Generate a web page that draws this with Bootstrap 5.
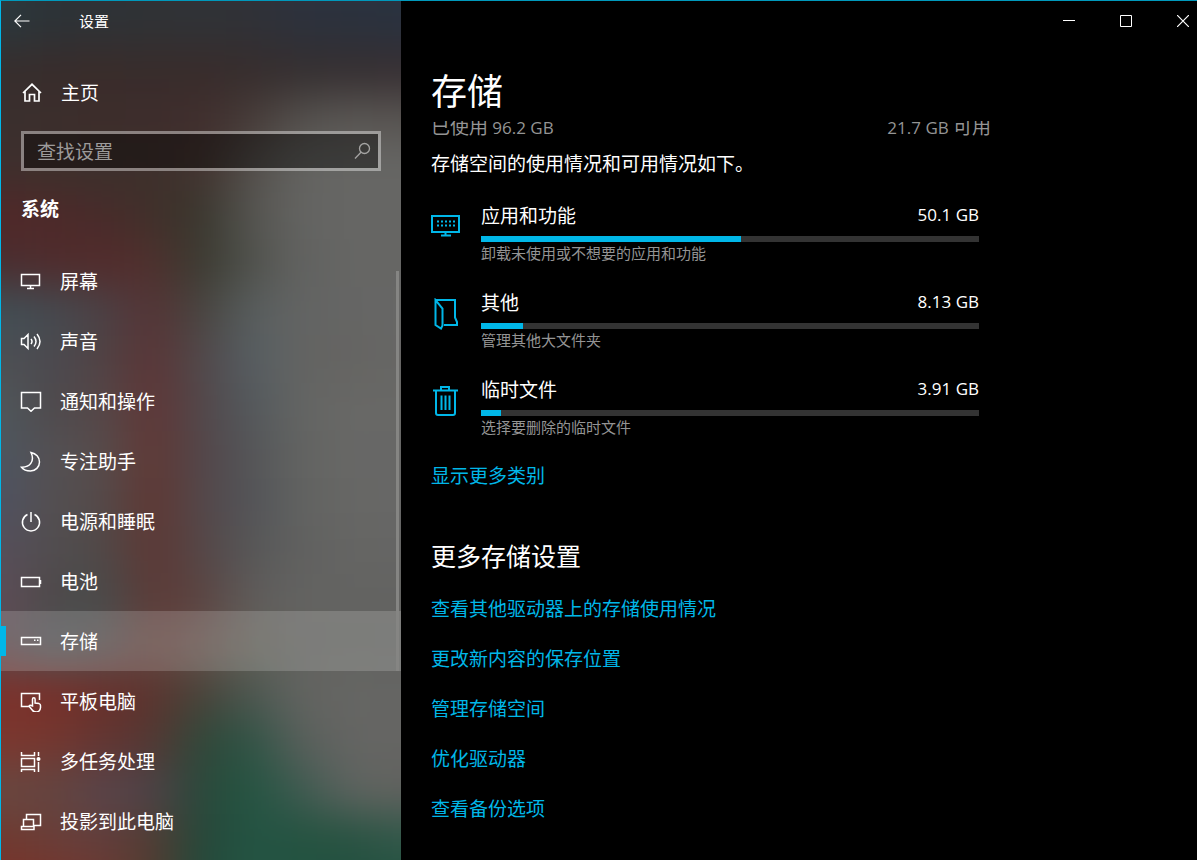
<!DOCTYPE html>
<html lang="zh-CN">
<head>
<meta charset="utf-8">
<meta name="viewport" content="width=device-width, initial-scale=1">
<title>设置</title>
<link href="https://cdn.jsdelivr.net/npm/bootstrap@5.3.0/dist/css/bootstrap.min.css" rel="stylesheet">
<style>
  :root { --accent: #00b7e8; --accent-dim: #0099bc; --muted: #949494; }
  body { background: #000; color: #fff; font-family: "Noto Sans CJK SC", sans-serif; font-size: 19px; line-height: 26px; }
  svg { fill: none; stroke: currentColor; flex: none; display: block; }
  .app-window { border-top: 1px solid var(--accent-dim); border-left: 1px solid var(--accent); }
  .title-row { height: 40px; }
  .bare { background: none; border: 0; color: inherit; padding: 0; display: flex; align-items: center; justify-content: center; }

  /* sidebar */
  .side-pane { flex: 0 0 400px; isolation: isolate; }
  .backdrop { position: absolute; inset: -50px; z-index: -1; filter: blur(20px); display: flex; flex-direction: column; }
  .backdrop i { flex: 1; }
  .backdrop i:nth-child(1)  { background: linear-gradient(90deg,#2b3a40,#2b3a40,#2b3338,#2d3338,#2e3236,#303338,#2f3338,#2c3340,#2a3340,#2a3442,#2a3442); }
  .backdrop i:nth-child(2)  { background: linear-gradient(90deg,#2c383d,#2c383d,#2d3236,#2e3236,#303235,#303236,#303136,#2d313c,#2b313c,#2a313e,#2a313e); }
  .backdrop i:nth-child(3)  { background: linear-gradient(90deg,#362e2d,#362e2d,#382c2b,#392c2a,#382c2b,#382c2b,#372d2d,#352f30,#362f31,#372f32,#372f32); }
  .backdrop i:nth-child(4)  { background: linear-gradient(90deg,#3a302e,#3a302e,#3b2e2c,#3d2d2b,#3e2d2c,#402e2d,#463b38,#54504d,#5a5754,#585451,#585451); }
  .backdrop i:nth-child(5)  { background: linear-gradient(90deg,#3f2f2d,#3f2f2d,#3d302c,#3c302c,#3d302c,#42322e,#534f4b,#646461,#666664,#666664,#666664); }
  .backdrop i:nth-child(6)  { background: linear-gradient(90deg,#512828,#512828,#4d2929,#482b2a,#41302a,#38362d,#555551,#646462,#666664,#666664,#666664); }
  .backdrop i:nth-child(7)  { background: linear-gradient(90deg,#4a2e30,#4a2e30,#4f2c2d,#532b2b,#50302e,#393a30,#50514c,#626361,#666664,#666664,#666664); }
  .backdrop i:nth-child(8)  { background: linear-gradient(90deg,#414f56,#414f56,#454a50,#4a4246,#573335,#46443f,#585e5f,#636463,#656564,#676766,#676766); }
  .backdrop i:nth-child(9)  { background: linear-gradient(90deg,#4e4f53,#4e4f53,#4b4a50,#504345,#5b3435,#50484a,#555e63,#646462,#656461,#676765,#676765); }
  .backdrop i:nth-child(10) { background: linear-gradient(90deg,#50585c,#50585c,#4e494c,#544849,#613535,#51474a,#53595d,#646563,#686866,#686866,#686866); }
  .backdrop i:nth-child(11) { background: linear-gradient(90deg,#4d5660,#4d5660,#545053,#564d4d,#613733,#52464a,#535558,#636462,#686866,#676766,#676766); }
  .backdrop i:nth-child(12) { background: linear-gradient(90deg,#4f5262,#4f5262,#544f50,#534b4b,#603631,#53474a,#525458,#626361,#676765,#676766,#676766); }
  .backdrop i:nth-child(13) { background: linear-gradient(90deg,#564f5a,#564f5a,#514d4f,#4f4a49,#5e3733,#544647,#565758,#616160,#656563,#656564,#656564); }
  .backdrop i:nth-child(14) { background: linear-gradient(90deg,#5e4d58,#5e4d58,#4e4848,#474c4c,#5d3a36,#5a4341,#5f5c5a,#636361,#636361,#636361,#636361); }
  .backdrop i:nth-child(15) { background: linear-gradient(90deg,#5d494d,#5d494d,#4f5759,#565151,#664641,#65524d,#626158,#62625f,#626360,#626361,#626361); }
  .backdrop i:nth-child(16) { background: linear-gradient(90deg,#7c312c,#7c312c,#783029,#6a302b,#5c332e,#474339,#4b5750,#636461,#666663,#656563,#656563); }
  .backdrop i:nth-child(17) { background: linear-gradient(90deg,#7c372e,#7c372e,#753830,#623532,#553733,#2f483a,#2e5445,#595f5b,#656563,#656563,#656563); }
  .backdrop i:nth-child(18) { background: linear-gradient(90deg,#684842,#684842,#64443f,#58454b,#4f4248,#29483a,#245542,#3e5a50,#5f6460,#62625f,#62625f); }
  .backdrop i:nth-child(19) { background: linear-gradient(90deg,#70392f,#70392f,#6b3e38,#623e3c,#553b33,#24483a,#245443,#245341,#285241,#32584a,#32584a); }
  .backdrop i:nth-child(20) { background: linear-gradient(90deg,#7b322a,#7b322a,#76332a,#6f3932,#523d31,#20493a,#245644,#22523f,#225040,#225140,#225140); }
  .back-btn { width: 41px; height: 38px; }
  .side-title { font-size: 15px; margin-left: 37px; }
  .home-link { margin-top: 31px; height: 40px; padding-left: 20px; gap: 18px; }
  .search-box { margin: 19px 20px 0; height: 40px; border: 3px solid rgba(255,255,255,.4); background: rgba(0,0,0,.4); background-clip: padding-box; padding: 0 6px 0 13px; }
  .search-box input { background: none; border: 0; outline: 0; color: #fff; min-width: 0; padding: 0; }
  .search-box input::placeholder { color: #9d9b9a; opacity: 1; }
  .search-box svg { color: #a5a4a3; }
  .side-heading { font-size: 19px; font-weight: 700; line-height: 26px; margin: 24px 20px 30px; }
  .side-item { height: 60px; padding-left: 19px; gap: 18px; position: relative; }
  .side-item svg { stroke-width: 1.5; }
  .side-item.active { background: rgba(255,255,255,.17); }
  .side-item.active::before { content: ""; position: absolute; left: -1px; top: 15px; width: 6px; height: 30px; background: var(--accent); }
  .scroll-thumb { position: absolute; right: 2px; top: 20px; width: 3px; height: 400px; background: #858583; }

  /* main pane */
  .window-btns { gap: 29px; }
  .window-btns .bare { width: 28px; height: 38px; }
  .pane-body { padding: 0 30px; }
  .pane-title { font-size: 36px; font-weight: 400; line-height: 48px; margin: 24px 0 8px; }
  .scroll-col { max-width: 560px; }
  .usage-line { height: 26px; margin-top: -8px; color: var(--muted); }
  .gb { font-family: "Open Sans", "Noto Sans CJK SC", sans-serif; font-size: 17px; }
  .intro { margin: 11px 0 26px; }
  .usage-list { gap: 26px; margin-right: 12px; }
  .usage-item { gap: 20px; }
  .usage-item svg { color: var(--accent); margin-top: 9px; }
  .usage-label { height: 26px; }
  .usage-bar { height: 6px; border-radius: 0; background: #333; margin: 8px 0 1px; --bs-progress-bar-bg: var(--accent); }
  .usage-note { font-size: 15px; line-height: 20px; color: var(--muted); }
  .accent-link { color: var(--accent); text-decoration: none; }
  .accent-link:hover { color: #7fdbf3; }
  .more-link { margin-top: 25px; }
  .sub-title { font-size: 25px; font-weight: 400; line-height: 34px; margin: 50px 0 23px; }
  .link-stack { gap: 24px; }
</style>
</head>
<body>
<div class="app-window d-flex vh-100 overflow-hidden">
  <aside class="side-pane position-relative overflow-hidden d-flex flex-column">
    <div class="backdrop" aria-hidden="true"><i></i><i></i><i></i><i></i><i></i><i></i><i></i><i></i><i></i><i></i><i></i><i></i><i></i><i></i><i></i><i></i><i></i><i></i><i></i><i></i></div>
    <div class="title-row d-flex align-items-center flex-shrink-0">
      <button class="bare back-btn" aria-label="返回"><svg width="16" height="14" viewBox="0 0 16 14" stroke-width="1.200"><path d="M15.500 7H1M7 .8L.8 7 7 13.200"/></svg></button>
      <span class="side-title">设置</span>
    </div>
    <a href="#" class="home-link d-flex align-items-center flex-shrink-0 text-white text-decoration-none">
      <svg width="22" height="22" viewBox="0 0 22 22" stroke-width="1.700"><path d="M2 12l9-8.700 9 8.700M4 10.500v9.500h4.500v-6.500h5V20H18v-9.500"/></svg>主页
    </a>
    <label class="search-box d-flex align-items-center flex-shrink-0">
      <input class="flex-grow-1" type="text" placeholder="查找设置" aria-label="查找设置">
      <svg width="18" height="18" viewBox="0 0 18 18" stroke-width="1.300"><circle cx="10.500" cy="6.500" r="5"/><path d="M7 10.200L1 16.500"/></svg>
    </label>
    <h2 class="side-heading">系统</h2>
    <nav class="position-relative flex-shrink-0">
      <a href="#" class="side-item d-flex align-items-center text-white text-decoration-none"><svg width="22" height="22" viewBox="0 0 22 22"><path d="M1.500 4.500h18v11h-18zM10.500 15.500v3M7 18.500h7"/></svg>屏幕</a>
      <a href="#" class="side-item d-flex align-items-center text-white text-decoration-none"><svg width="22" height="22" viewBox="0 0 22 22"><path d="M1.500 8.500v6h2.500l4 4v-14l-4 4zM11 9q2 2.500 0 5M14 6.500q4 5 0 10M17 4q6 7.500 0 15"/></svg>声音</a>
      <a href="#" class="side-item d-flex align-items-center text-white text-decoration-none"><svg width="22" height="22" viewBox="0 0 22 22"><path d="M1.500 2.500h19v15.500h-6l-3.500 3.300-3.500-3.300h-6z"/></svg>通知和操作</a>
      <a href="#" class="side-item d-flex align-items-center text-white text-decoration-none"><svg width="22" height="22" viewBox="0 0 22 22"><path d="M11 2.500c5 1 8.500 4.800 8.500 9.500a9 9 0 0 1-9 9c-4 0-7-1.200-9-3.800C10 17.500 15 11 11 2.500z"/></svg>专注助手</a>
      <a href="#" class="side-item d-flex align-items-center text-white text-decoration-none"><svg width="22" height="22" viewBox="0 0 22 22"><path d="M7.500 4.500a8.600 8.600 0 1 0 7 0M11 2v10"/></svg>电源和睡眠</a>
      <a href="#" class="side-item d-flex align-items-center text-white text-decoration-none"><svg width="22" height="22" viewBox="0 0 22 22"><path d="M1.500 7.500h18v9h-18zM20.500 10v4"/></svg>电池</a>
      <a href="#" class="side-item active d-flex align-items-center text-white text-decoration-none" aria-current="page"><svg width="22" height="22" viewBox="0 0 22 22"><path d="M1.500 7.500h19v7h-19zM14 10.300h1.500M17 10.300h1.500"/></svg>存储</a>
      <a href="#" class="side-item d-flex align-items-center text-white text-decoration-none"><svg width="22" height="22" viewBox="0 0 22 22"><path d="M9.500 16.500h-8v-13h18V10M12.500 16V9.300q0-1.500 1.300-1.500t1.300 1.500V13l4 .6q1.500.4 1.400 2v2q-.3 4.400-4.300 4.400-2.700 0-4-2l-2.700-3.200q-.8-1.500.9-1.600z"/></svg>平板电脑</a>
      <a href="#" class="side-item d-flex align-items-center text-white text-decoration-none"><svg width="22" height="22" viewBox="0 0 22 22"><path d="M1.500 2v3.500h13V2M1.500 8.500h13v8h-13zM1.500 22v-2.500h13V22M18.500 2v4M18.500 12v10"/><circle cx="18.500" cy="9" r="2" fill="currentColor" stroke="none"/></svg>多任务处理</a>
      <a href="#" class="side-item d-flex align-items-center text-white text-decoration-none"><svg width="22" height="22" viewBox="0 0 22 22"><path d="M6.500 9V4.500h14v11H14M3.500 9.500h10v7h-10zM1.500 16.500h12.500v3H1.500z"/></svg>投影到此电脑</a>
      <span class="scroll-thumb" aria-hidden="true"></span>
    </nav>
  </aside>

  <main class="flex-grow-1 d-flex flex-column overflow-hidden">
    <div class="title-row window-btns d-flex justify-content-end align-items-center flex-shrink-0">
      <button class="bare" aria-label="最小化"><svg width="12" height="12" viewBox="0 0 12 12"><path d="M0 5.500h12"/></svg></button>
      <button class="bare" aria-label="最大化"><svg width="12" height="12" viewBox="0 0 12 12"><path d="M.5.5h11v11H.5z"/></svg></button>
      <button class="bare" aria-label="关闭"><svg width="12" height="12" viewBox="0 0 12 12" stroke-width="1.200"><path d="M0 0l12 12M12 0L0 12"/></svg></button>
    </div>
    <div class="pane-body flex-grow-1 d-flex flex-column overflow-hidden">
      <h1 class="pane-title">存储</h1>
      <div class="scroll-col flex-grow-1 overflow-hidden">
        <div class="usage-line d-flex justify-content-between">
          <span>已使用 <span class="gb">96.2 GB</span></span>
          <span><span class="gb">21.7 GB</span> 可用</span>
        </div>
        <p class="intro">存储空间的使用情况和可用情况如下。</p>
        <div class="usage-list d-flex flex-column">
          <div class="usage-item d-flex">
            <svg width="30" height="32" viewBox="0 0 30 32" stroke-width="2"><path d="M1 5h27v16H1zM14.500 21v3M10 24.500h10"/><path d="M6 10.500h18M6 14.500h18" stroke-dasharray="2 2"/></svg>
            <div class="flex-grow-1">
              <div class="usage-label d-flex justify-content-between"><span>应用和功能</span><span class="gb">50.1 GB</span></div>
              <div class="progress usage-bar" role="progressbar" aria-label="应用和功能"><div class="progress-bar" style="width:52.2%"></div></div>
              <div class="usage-note">卸载未使用或不想要的应用和功能</div>
            </div>
          </div>
          <div class="usage-item d-flex">
            <svg width="30" height="32" viewBox="0 0 30 32" stroke-width="2"><path d="M4.500 2H24v17.500l2 4.500V27H13"/><path d="M4.500 2v25l5.500 3.500 1.500-3V10.500z"/></svg>
            <div class="flex-grow-1">
              <div class="usage-label d-flex justify-content-between"><span>其他</span><span class="gb">8.13 GB</span></div>
              <div class="progress usage-bar" role="progressbar" aria-label="其他"><div class="progress-bar" style="width:8.4%"></div></div>
              <div class="usage-note">管理其他大文件夹</div>
            </div>
          </div>
          <div class="usage-item d-flex">
            <svg width="30" height="32" viewBox="0 0 30 32" stroke-width="2"><path d="M2 5.500h25M10 5V2h8v3M5 5.500V28q0 2 2 2h15q2 0 2-2V5.500M10.500 10.500V25M14.500 10.500V25M18.500 10.500V25"/></svg>
            <div class="flex-grow-1">
              <div class="usage-label d-flex justify-content-between"><span>临时文件</span><span class="gb">3.91 GB</span></div>
              <div class="progress usage-bar" role="progressbar" aria-label="临时文件"><div class="progress-bar" style="width:4%"></div></div>
              <div class="usage-note">选择要删除的临时文件</div>
            </div>
          </div>
        </div>
        <div class="more-link"><a href="#" class="accent-link">显示更多类别</a></div>
        <h2 class="sub-title">更多存储设置</h2>
        <div class="link-stack d-flex flex-column align-items-start">
          <a href="#" class="accent-link">查看其他驱动器上的存储使用情况</a>
          <a href="#" class="accent-link">更改新内容的保存位置</a>
          <a href="#" class="accent-link">管理存储空间</a>
          <a href="#" class="accent-link">优化驱动器</a>
          <a href="#" class="accent-link">查看备份选项</a>
        </div>
      </div>
    </div>
  </main>
</div>
<script src="https://cdn.jsdelivr.net/npm/bootstrap@5.3.0/dist/js/bootstrap.bundle.min.js"></script>
</body>
</html>
